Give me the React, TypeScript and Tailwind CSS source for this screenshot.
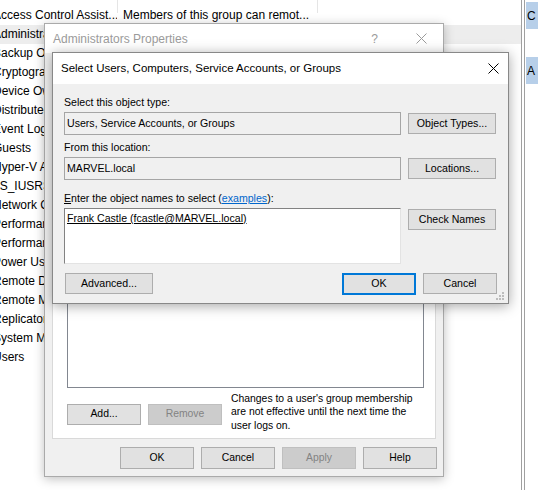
import React from "react";

const rows: [string, string][] = [
  ["Access Control Assist...", "Members of this group can remot..."],
  ["Administrators", "Administrators have complete an..."],
  ["Backup Operators", "Backup Operators can override se..."],
  ["Cryptographic Operators", "Members are authorized to perfor..."],
  ["Device Owners", "Members of this group can chang..."],
  ["Distributed COM Users", "Members are allowed to launch, a..."],
  ["Event Log Readers", "Members of this group can read e..."],
  ["Guests", "Guests have the same access as m..."],
  ["Hyper-V Administrators", "Members of this group have comp..."],
  ["IIS_IUSRS", "Built-in group used by Internet Inf..."],
  ["Network Configuration Operators", "Members in this group can have s..."],
  ["Performance Log Users", "Members of this group may sched..."],
  ["Performance Monitor Users", "Members of this group can access..."],
  ["Power Users", "Power Users are included for back..."],
  ["Remote Desktop Users", "Members in this group are granted..."],
  ["Remote Management Users", "Members of this group can access..."],
  ["Replicator", "Supports file replication in a dom..."],
  ["System Managed Accounts Group", "Members of this group are manag..."],
  ["Users", "Users are prevented from making a..."],
];

function CloseX({ color, size }: { color: string; size: number }) {
  return (
    <svg width={size} height={size} viewBox={`0 0 ${size} ${size}`} className="block">
      <path d={`M0.5 0.5 L${size - 0.5} ${size - 0.5} M${size - 0.5} 0.5 L0.5 ${size - 0.5}`} stroke={color} strokeWidth="1" fill="none" />
    </svg>
  );
}

export default function App() {
  return (
    <div className="w-[538px] h-[490px] bg-white overflow-hidden font-['Liberation_Sans',Arial,sans-serif] text-black">
      <div className="flex h-full">
        {/* main list area */}
        <div className="relative w-[521px] h-full overflow-hidden">
          <div className="absolute left-[117px] top-0 w-px h-[13px] bg-[#e5e5e5]" />
          <div className="absolute left-[317px] top-0 w-px h-[13px] bg-[#e5e5e5]" />
          <div className="pt-[6px] flex flex-col">
            {rows.map(([n, d], i) => (
              <div
                key={i}
                className={`h-[19px] flex items-center text-[12px] leading-[19px] ${i === 1 ? "bg-[#ededed]" : ""}`}
              >
                <div className="w-[124px] ml-[-7px] shrink-0 overflow-hidden whitespace-nowrap">{n}</div>
                <div className="w-[200px] shrink-0 overflow-hidden whitespace-nowrap pl-[6px]">{d}</div>
              </div>
            ))}
          </div>

          {/* Background dialog: Administrators Properties */}
          <div className="absolute left-[44px] top-[23px] w-[400px] h-[454px] border border-[#aaaaaa] bg-[#f0f0f0] flex flex-col shadow-[0_2px_10px_rgba(0,0,0,0.25)]">
            <div className="h-[29px] shrink-0 bg-white flex items-center pl-[8px] pr-[16px]">
              <span className="text-[12px] text-[#9b9b9b] whitespace-nowrap">Administrators Properties</span>
              <span className="ml-auto text-[12px] text-[#9b9b9b] mr-[38px]">?</span>
              <CloseX color="#9b9b9b" size={11} />
            </div>
            <div className="flex-1 flex flex-col px-[7px] pt-[27px] pb-[7px]">
              <div className="h-[359px] shrink-0 bg-white border border-[#d9d9d9] flex flex-col pl-[14px] pr-[11px] pb-[6px]">
                <div className="flex-1 mt-[20px] border border-[#828790] bg-white" />
                <div className="mt-[4px] flex items-start text-[10.4px]">
                  <div className="mt-[12px] w-[74px] h-[21px] border border-[#adadad] bg-[#e1e1e1] flex items-center justify-center">
                    Add...
                  </div>
                  <div className="mt-[12px] ml-[7px] w-[74px] h-[21px] border border-[#bfbfbf] bg-[#cccccc] text-[#838383] flex items-center justify-center">
                    Remove
                  </div>
                  <div className="ml-[9px] leading-[13.5px] text-[10.4px] text-black">
                    Changes to a user's group membership
                    <br />
                    are not effective until the next time the
                    <br />
                    user logs on.
                  </div>
                </div>
              </div>
              <div className="mt-[8px] flex justify-end gap-[7px] -mr-[1px] text-[10.4px]">
                <div className="w-[74px] h-[22px] border border-[#adadad] bg-[#e1e1e1] flex items-center justify-center">OK</div>
                <div className="w-[74px] h-[22px] border border-[#adadad] bg-[#e1e1e1] flex items-center justify-center">Cancel</div>
                <div className="w-[74px] h-[22px] border border-[#bfbfbf] bg-[#cccccc] text-[#838383] flex items-center justify-center">Apply</div>
                <div className="w-[74px] h-[22px] border border-[#adadad] bg-[#e1e1e1] flex items-center justify-center">Help</div>
              </div>
            </div>
          </div>

          {/* Front dialog: Select Users... */}
          <div className="absolute left-[52px] top-[52px] w-[457px] h-[252px] border border-[#888888] bg-[#f0f0f0] flex flex-col shadow-[0_2px_12px_rgba(0,0,0,0.35)]">
            <div className="h-[31px] shrink-0 bg-white flex items-center pl-[8px] pr-[9px]">
              <span className="text-[11.5px] whitespace-nowrap">Select Users, Computers, Service Accounts, or Groups</span>
              <span className="ml-auto">
                <CloseX color="#000000" size={11} />
              </span>
            </div>
            <div className="relative flex-1 flex flex-col pl-[11px] pt-[10px] text-[10.6px]">
              <div className="h-[16px] leading-[16px] whitespace-nowrap">Select this object type:</div>
              <div className="mt-[2px] flex items-start">
                <div className="w-[337px] h-[23px] border border-[#a5a5a5] bg-[#f0f0f0] pl-[2px] flex items-center whitespace-nowrap">
                  Users, Service Accounts, or Groups
                </div>
                <div className="ml-[7px] mt-[1px] w-[88px] h-[21px] border border-[#adadad] bg-[#e1e1e1] flex items-center justify-center whitespace-nowrap">
                  Object Types...
                </div>
              </div>
              <div className="mt-[4px] h-[16px] leading-[16px] whitespace-nowrap">From this location:</div>
              <div className="mt-[2px] flex items-start">
                <div className="w-[337px] h-[23px] border border-[#a5a5a5] bg-[#f0f0f0] pl-[2px] flex items-center whitespace-nowrap">
                  MARVEL.local
                </div>
                <div className="ml-[7px] mt-[1px] w-[88px] h-[21px] border border-[#adadad] bg-[#e1e1e1] flex items-center justify-center whitespace-nowrap">
                  Locations...
                </div>
              </div>
              <div className="mt-[10px] h-[16px] leading-[16px] whitespace-nowrap">
                <span className="underline">E</span>nter the object names to select (
                <span className="text-[#0066cc] underline">examples</span>):
              </div>
              <div className="mt-[2px] flex items-start">
                <div className="w-[337px] h-[56px] border-t border-l border-[#828282] border-r-[#e3e3e3] border-b-[#e3e3e3] border-r border-b bg-white pl-[2px] pt-[2px] leading-[14px] whitespace-nowrap">
                  <span className="underline">Frank Castle (fcastle@MARVEL.local)</span>
                </div>
                <div className="ml-[7px] mt-[1px] w-[88px] h-[21px] border border-[#adadad] bg-[#e1e1e1] flex items-center justify-center whitespace-nowrap">
                  Check Names
                </div>
              </div>
              <div className="mt-[9px] flex items-start">
                <div className="ml-[1px] w-[88px] h-[21px] border border-[#adadad] bg-[#e1e1e1] flex items-center justify-center whitespace-nowrap">
                  Advanced...
                </div>
                <div className="ml-[189px] w-[74px] h-[22px] border-2 border-[#0078d7] bg-[#e1e1e1] flex items-center justify-center">
                  OK
                </div>
                <div className="ml-[7px] w-[74px] h-[21px] border border-[#adadad] bg-[#e1e1e1] flex items-center justify-center">
                  Cancel
                </div>
              </div>
              <svg width="9" height="9" viewBox="0 0 9 9" className="absolute right-[3px] bottom-[2px]">
                <rect x="6" y="0" width="2" height="2" fill="#bcbcbc" />
                <rect x="3" y="3" width="2" height="2" fill="#bcbcbc" />
                <rect x="6" y="3" width="2" height="2" fill="#bcbcbc" />
                <rect x="0" y="6" width="2" height="2" fill="#bcbcbc" />
                <rect x="3" y="6" width="2" height="2" fill="#bcbcbc" />
                <rect x="6" y="6" width="2" height="2" fill="#bcbcbc" />
              </svg>
            </div>
          </div>
        </div>

        {/* right edge panel */}
        <div className="w-px h-full bg-[#a0a0a0]" />
        <div className="w-[2px] h-full" />
        <div className="w-px h-full bg-[#a0a0a0]" />
        <div className="w-[13px] h-full pl-px flex flex-col">
          <div className="mt-[2px] h-[27px] bg-[#b7cfe9] text-[12px] pl-[1px] flex items-center overflow-hidden">C</div>
          <div className="mt-[28px] h-[27px] bg-[#b7cfe9] text-[12px] pl-[1px] flex items-center overflow-hidden">A</div>
        </div>
      </div>
    </div>
  );
}
